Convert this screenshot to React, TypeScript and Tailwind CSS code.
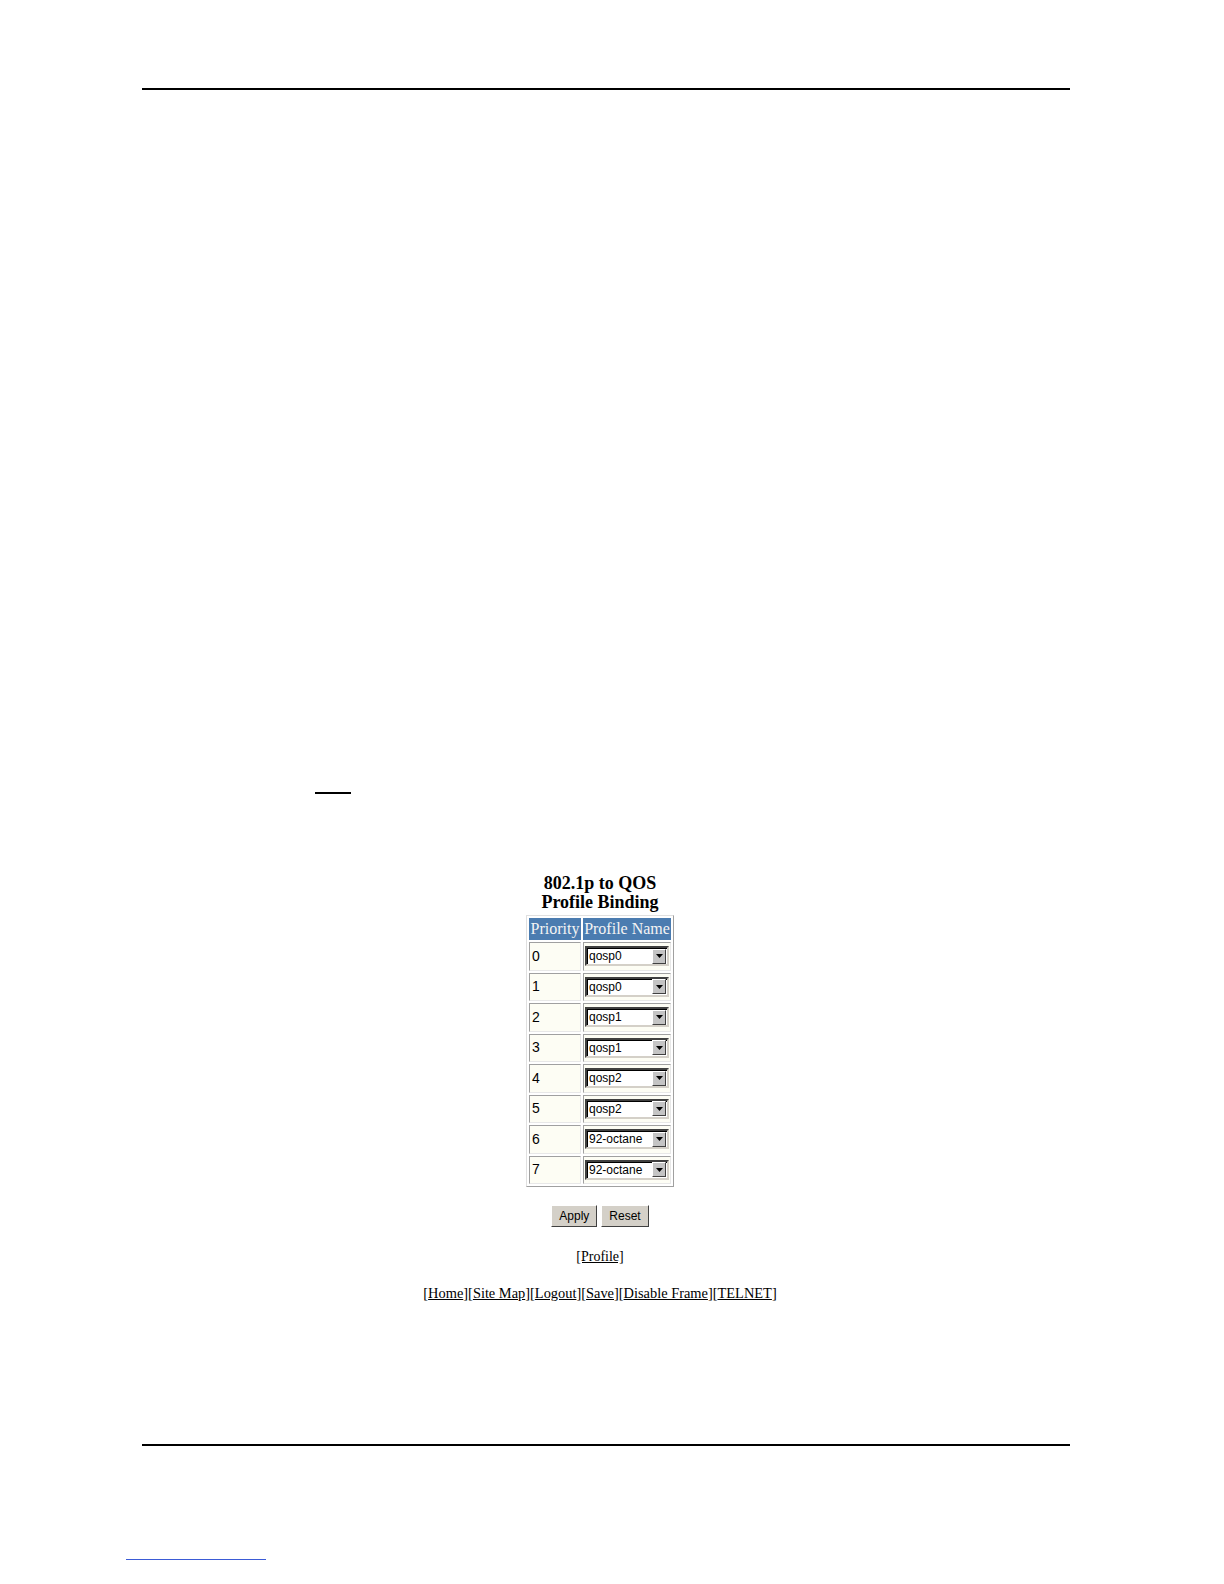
import React from 'react';

const rows = [
  { p: '0', v: 'qosp0' },
  { p: '1', v: 'qosp0' },
  { p: '2', v: 'qosp1' },
  { p: '3', v: 'qosp1' },
  { p: '4', v: 'qosp2' },
  { p: '5', v: 'qosp2' },
  { p: '6', v: '92-octane' },
  { p: '7', v: '92-octane' },
];

const navLinks = ['Home', 'Site Map', 'Logout', 'Save', 'Disable Frame', 'TELNET'];

function FakeSelect({ value }: { value: string }) {
  return (
    <div className="flex items-center h-[20px] w-[84px] bg-white border-2 border-t-[#404040] border-l-[#404040] border-b-[#d4d0c8] border-r-[#d4d0c8] shadow-[inset_1px_1px_0_#000]">
      <span className="flex-1 pl-[2px] text-[12px] leading-none text-black font-['Liberation_Sans',Arial,sans-serif]">{value}</span>
      <span className="flex items-center justify-center w-[14px] h-[15px] mr-[1px] bg-[#c4c4c4] border border-t-white border-l-white border-b-[#404040] border-r-[#404040]">
        <svg width="7" height="4" viewBox="0 0 7 4"><path d="M0 0h7L3.5 4z" fill="#000" /></svg>
      </span>
    </div>
  );
}

export default function App() {
  return (
    <div className="relative w-[1224px] h-[1584px] bg-white font-['Liberation_Serif','Times_New_Roman',serif] text-black">
      {/* header rule */}
      <div className="pt-[88px] pl-[142px]">
        <div className="w-[928px] h-[2px] bg-black" />
      </div>

      {/* short rule */}
      <div className="pt-[702px] pl-[315px]">
        <div className="w-[36px] h-[2px] bg-black" />
      </div>

      {/* content */}
      <div className="ml-[142px] w-[916px] pt-[80px] flex flex-col items-center">
        <h1 className="text-[18px] leading-[19px] font-bold text-center">
          802.1p to QOS<br />Profile Binding
        </h1>
        <table className="mt-[3px] border border-t-[#e0e0e0] border-l-[#e0e0e0] border-b-[#a0a0a0] border-r-[#a0a0a0] border-separate border-spacing-[2px]">
          <thead>
            <tr>
              <th className="bg-[#4b7cb0] text-[#f4f4f4] font-normal text-[16px] leading-[22px] px-[1px] py-0">Priority</th>
              <th className="bg-[#4b7cb0] text-[#f4f4f4] font-normal text-[16px] leading-[22px] px-[1px] py-0">Profile Name</th>
            </tr>
          </thead>
          <tbody>
            {rows.map((r) => (
              <tr key={r.p}>
                <td className="h-[28.5px] w-[52px] bg-[#fdfdf4] border border-t-[#a0a0a0] border-l-[#a0a0a0] border-b-[#e8e8e8] border-r-[#e8e8e8] text-[14px] font-['Liberation_Sans',Arial,sans-serif] pl-[2px] align-middle">{r.p}</td>
                <td className="h-[28.5px] bg-[#fdfdf4] border border-t-[#a0a0a0] border-l-[#a0a0a0] border-b-[#e8e8e8] border-r-[#e8e8e8] px-[1px] align-middle">
                  <FakeSelect value={r.v} />
                </td>
              </tr>
            ))}
          </tbody>
        </table>

        <div className="mt-[18px] flex gap-[4px]">
          {['Apply', 'Reset'].map((b) => (
            <button key={b} className="h-[22px] px-[7px] bg-[#d4d0c8] text-[12px] leading-none font-['Liberation_Sans',Arial,sans-serif] border border-t-white border-l-white border-b-[#404040] border-r-[#404040]">{b}</button>
          ))}
        </div>

        <a className="mt-[22px] text-[14px] leading-[16px] underline">[Profile]</a>

        <div className="mt-[20px] text-[14.4px] leading-[16px] underline">
          {navLinks.map((l) => (
            <span key={l}>[{l}]</span>
          ))}
        </div>
      </div>

      {/* footer rule */}
      <div className="pt-[143px] pl-[142px]">
        <div className="w-[928px] h-[2px] bg-black" />
      </div>
      <div className="pt-[113px] pl-[126px]">
        <div className="w-[140px] h-px bg-[#3b5bd6]" />
      </div>
    </div>
  );
}
